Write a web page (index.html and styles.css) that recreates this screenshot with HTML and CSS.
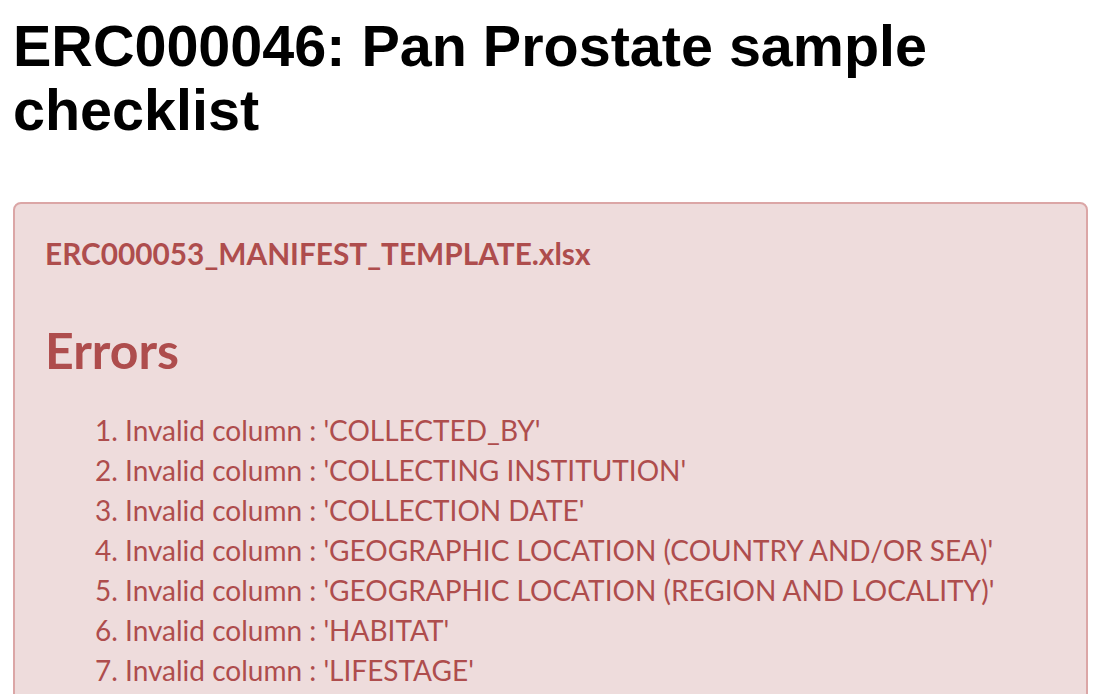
FILE: index.html
```html
<!DOCTYPE html>
<html lang="en">
<head>
<meta charset="utf-8">
<title>ERC000046: Pan Prostate sample checklist</title>
<link rel="stylesheet" href="styles.css">
</head>
<body>
<main class="page">
  <h1 class="title">ERC000046: Pan Prostate sample checklist</h1>
  <section class="alert">
    <h4 class="file">ERC000053_MANIFEST_TEMPLATE.xlsx</h4>
    <h3 class="errors-title">Errors</h3>
    <ol class="errors">
      <li>Invalid column : 'COLLECTED_BY'</li>
      <li>Invalid column : 'COLLECTING INSTITUTION'</li>
      <li>Invalid column : 'COLLECTION DATE'</li>
      <li>Invalid column : 'GEOGRAPHIC LOCATION (COUNTRY AND/OR SEA)'</li>
      <li>Invalid column : 'GEOGRAPHIC LOCATION (REGION AND LOCALITY)'</li>
      <li>Invalid column : 'HABITAT'</li>
      <li>Invalid column : 'LIFESTAGE'</li>
      <li>Invalid column : 'ORGANISM PART'</li>
      <li>Invalid column : 'SEX'</li>
    </ol>
  </section>
</main>
</body>
</html>
```

FILE: styles.css
```css
html, body {
  margin: 0;
  padding: 0;
  background: #ffffff;
}

.page {
  padding: 14px 14px 0 13px;
}

.title {
  margin: 0 0 60px 0;
  font-family: "Liberation Sans", Arial, Helvetica, sans-serif;
  font-weight: bold;
  font-size: 57.5px;
  line-height: 64px;
  color: #000000;
}

.alert {
  background: #eedcdc;
  border: 2px solid #dba6a6;
  border-radius: 8px;
  padding: 30px;
  color: #ae4d4d;
  font-family: Lato, "Open Sans", sans-serif;
  font-size: 28px;
  line-height: 40px;
}

.file {
  margin: 0;
  font-size: 29.8px;
  font-weight: bold;
  line-height: 40px;
}

.errors-title {
  margin: 49px 0 0 0;
  font-size: 50px;
  font-weight: bold;
  line-height: 1.1;
}

.errors {
  margin: 32px 0 0 0;
  padding-left: 80px;
}

.errors li {
  line-height: 40px;
}
```
